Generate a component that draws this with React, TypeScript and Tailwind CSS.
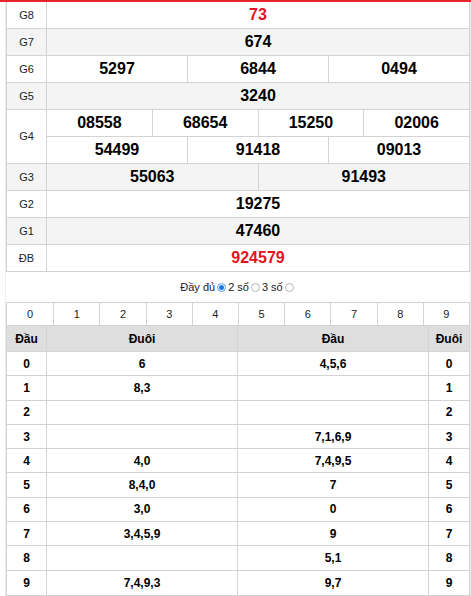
import React from "react";

type Prize = { label: string; rows: string[][]; red?: boolean };

const prizes: Prize[] = [
  { label: "G8", rows: [["73"]], red: true },
  { label: "G7", rows: [["674"]] },
  { label: "G6", rows: [["5297", "6844", "0494"]] },
  { label: "G5", rows: [["3240"]] },
  {
    label: "G4",
    rows: [
      ["08558", "68654", "15250", "02006"],
      ["54499", "91418", "09013"],
    ],
  },
  { label: "G3", rows: [["55063", "91493"]] },
  { label: "G2", rows: [["19275"]] },
  { label: "G1", rows: [["47460"]] },
  { label: "ĐB", rows: [["924579"]], red: true },
];

const loto = [
  { d: "0", tail: "6", head: "4,5,6" },
  { d: "1", tail: "8,3", head: "" },
  { d: "2", tail: "", head: "" },
  { d: "3", tail: "", head: "7,1,6,9" },
  { d: "4", tail: "4,0", head: "7,4,9,5" },
  { d: "5", tail: "8,4,0", head: "7" },
  { d: "6", tail: "3,0", head: "0" },
  { d: "7", tail: "3,4,5,9", head: "9" },
  { d: "8", tail: "", head: "5,1" },
  { d: "9", tail: "7,4,9,3", head: "9,7" },
];

const Radio = ({ checked }: { checked?: boolean }) =>
  checked ? (
    <span className="mx-[2px] inline-flex h-[9px] w-[9px] items-center justify-center rounded-full border border-[#5b9be6] bg-white">
      <span className="h-[5px] w-[5px] rounded-full bg-[#1e7ce6]" />
    </span>
  ) : (
    <span className="mx-[2px] inline-block h-[9px] w-[9px] rounded-full border border-[#b5b5b5] bg-white" />
  );

export default function App() {
  return (
    <div className="w-[471px] border-t-2 border-[#e8232a] bg-white font-['Liberation_Sans',Arial,sans-serif] text-black">
      <div className="ml-[5px] w-[466px] border-x border-[#ececec]">
        {/* prize table */}
        <div className="border-x border-[#d3d3d3]">
          {prizes.map((p, i) => (
            <div
              key={p.label}
              className={`flex border-b border-[#d3d3d3] ${i % 2 === 1 ? "bg-[#f4f4f4]" : "bg-white"}`}
            >
              <div className="flex w-[40px] shrink-0 items-center justify-center border-r border-[#d3d3d3] text-[11px] text-[#222]">
                {p.label}
              </div>
              <div className="flex flex-1 flex-col">
                {p.rows.map((r, ri) => (
                  <div
                    key={ri}
                    className={`flex h-[26px] ${ri < p.rows.length - 1 ? "h-[27px] border-b border-[#d3d3d3]" : ""}`}
                  >
                    {r.map((n, ni) => (
                      <div
                        key={ni}
                        className={`flex flex-1 items-center justify-center text-[16px] font-bold ${ni > 0 ? "border-l border-[#d3d3d3]" : ""} ${p.red ? "text-[#e3141e]" : ""}`}
                      >
                        {n}
                      </div>
                    ))}
                  </div>
                ))}
              </div>
            </div>
          ))}
        </div>

        {/* options */}
        <div className="flex h-[30px] items-center justify-center text-[11px] text-[#222]">
          <span>Đầy đủ</span>
          <Radio checked />
          <span>2 số</span>
          <Radio />
          <span>3 số</span>
          <Radio />
        </div>

        {/* loto table */}
        <div className="border border-[#d3d3d3]">
          <div className="grid h-[23px] grid-cols-10 border-b border-[#d3d3d3] text-[11px] text-[#222]">
            {Array.from({ length: 10 }, (_, i) => (
              <div
                key={i}
                className={`flex items-center justify-center ${i > 0 ? "border-l border-[#d3d3d3]" : ""}`}
              >
                {i}
              </div>
            ))}
          </div>
          <div className="flex h-[26px] border-b border-[#d3d3d3] bg-[#dedede] text-[12px] font-bold">
            <div className="flex w-[40px] items-center justify-center border-r border-[#d3d3d3]">Đầu</div>
            <div className="flex w-[191px] items-center justify-center border-r border-[#d3d3d3]">Đuôi</div>
            <div className="flex w-[191px] items-center justify-center border-r border-[#d3d3d3]">Đầu</div>
            <div className="flex flex-1 items-center justify-center">Đuôi</div>
          </div>
          {loto.map((r, i) => (
            <div
              key={r.d}
              className={`flex h-[24.3px] text-[12px] font-bold ${i < loto.length - 1 ? "border-b border-[#d3d3d3]" : ""}`}
            >
              <div className="flex w-[40px] items-center justify-center border-r border-[#d3d3d3]">{r.d}</div>
              <div className="flex w-[191px] items-center justify-center border-r border-[#d3d3d3]">{r.tail}</div>
              <div className="flex w-[191px] items-center justify-center border-r border-[#d3d3d3]">{r.head}</div>
              <div className="flex flex-1 items-center justify-center">{r.d}</div>
            </div>
          ))}
        </div>
      </div>

      {/* top edge of the block below */}
      <div className="mt-[1px] flex h-[2px]">
        <div className="ml-[83px] w-[262px] bg-gradient-to-r from-[#2a1a1a] via-[#b0161c] to-[#c8262a]" />
        <div className="ml-[3px] flex-1 bg-gradient-to-r from-[#c23a2e] via-[#d9a36a] to-[#7fa3c4]" />
      </div>
    </div>
  );
}
